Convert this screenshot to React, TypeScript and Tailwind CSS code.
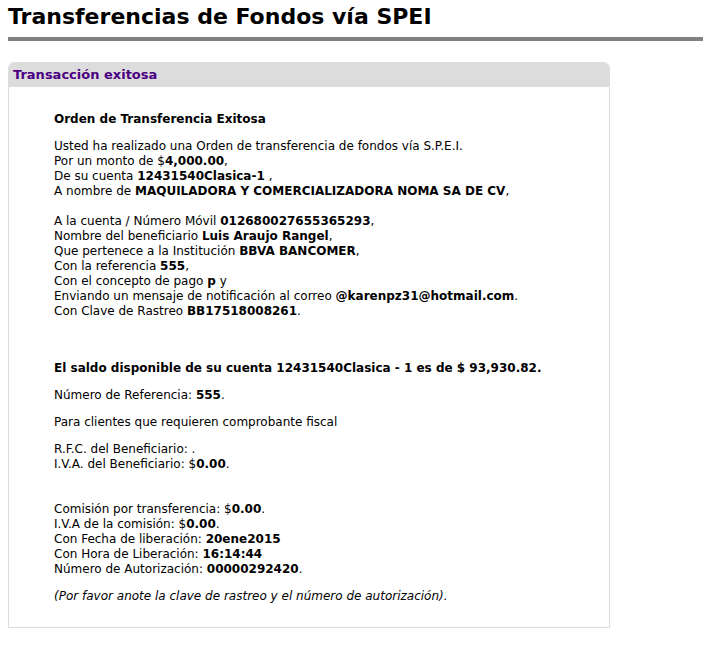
import React from "react";

export default function App() {
  return (
    <main className="bg-white pl-2 font-['Verdana','DejaVu_Sans',sans-serif] text-black">
      <h1 className="border-b-4 border-[#808080] pt-[3px] pb-[7px] text-[22px] leading-[27px] font-bold">
        Transferencias de Fondos vía SPEI
      </h1>
      <section className="mt-[21px] max-w-[602px] overflow-hidden rounded-t-md border border-[#dcdcdc]">
        <h2 className="bg-[#dcdcdc] px-1 py-0.5 text-[13px] leading-5 font-bold text-[#4b0082]">
          Transacción exitosa
        </h2>
        <div className="flex flex-col gap-3 px-[45px] pt-[25px] pb-[23px] text-[12px] leading-[15px]">
          <h3 className="font-bold">Orden de Transferencia Exitosa</h3>
          <div>
            <p>Usted ha realizado una Orden de transferencia de fondos vía S.P.E.I.</p>
            <p>Por un monto de $<b>4,000.00</b>,</p>
            <p>De su cuenta <b>12431540Clasica-1</b> ,</p>
            <p>A nombre de <b>MAQUILADORA Y COMERCIALIZADORA NOMA SA DE CV</b>,</p>
            <p className="pt-[15px]">A la cuenta / Número Móvil <b>012680027655365293</b>,</p>
            <p>Nombre del beneficiario <b>Luis Araujo Rangel</b>,</p>
            <p>Que pertenece a la Institución <b>BBVA BANCOMER</b>,</p>
            <p>Con la referencia <b>555</b>,</p>
            <p>Con el concepto de pago <b>p</b> y</p>
            <p>Enviando un mensaje de notificación al correo <b>@karenpz31@hotmail.com</b>.</p>
            <p>Con Clave de Rastreo <b>BB17518008261</b>.</p>
          </div>
          <p className="pt-[30px] font-bold">
            El saldo disponible de su cuenta 12431540Clasica - 1 es de $ 93,930.82.
          </p>
          <p>Número de Referencia: <b>555</b>.</p>
          <p>Para clientes que requieren comprobante fiscal</p>
          <div>
            <p>R.F.C. del Beneficiario: .</p>
            <p>I.V.A. del Beneficiario: $<b>0.00</b>.</p>
            <p className="pt-[30px]">Comisión por transferencia: $<b>0.00</b>.</p>
            <p>I.V.A de la comisión: $<b>0.00</b>.</p>
            <p>Con Fecha de liberación: <b>20ene2015</b></p>
            <p>Con Hora de Liberación: <b>16:14:44</b></p>
            <p>Número de Autorización: <b>00000292420</b>.</p>
          </div>
          <p className="italic">
            (Por favor anote la clave de rastreo y el número de autorización).
          </p>
        </div>
      </section>
    </main>
  );
}
